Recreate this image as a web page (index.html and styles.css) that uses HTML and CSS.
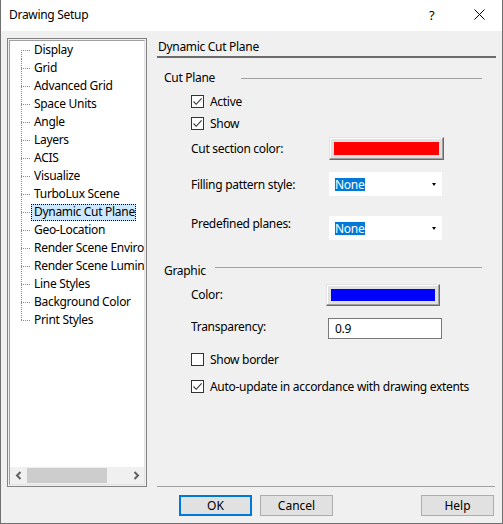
FILE: index.html
```html
<!DOCTYPE html>
<html lang="en">
<head>
<meta charset="utf-8">
<title>Drawing Setup</title>
<link rel="stylesheet" href="styles.css">
</head>
<body>
<div class="window">
  <header class="titlebar">
    <span class="title">Drawing Setup</span>
    <span class="tb-help">?</span>
    <span class="tb-close">
      <svg width="11" height="11" viewBox="0 0 11 11"><path d="M0.5 0.5 L10.5 10.5 M10.5 0.5 L0.5 10.5" stroke="#000" stroke-width="1" fill="none"/></svg>
    </span>
  </header>

  <div class="client">
    <div class="tree">
      <div class="tree-inner">
        <ul class="tree-list">
          <li class="first"><span>Display</span></li>
          <li><span>Grid</span></li>
          <li><span>Advanced Grid</span></li>
          <li><span>Space Units</span></li>
          <li><span>Angle</span></li>
          <li><span>Layers</span></li>
          <li><span>ACIS</span></li>
          <li><span>Visualize</span></li>
          <li><span>TurboLux Scene</span></li>
          <li class="selected"><span>Dynamic Cut Plane</span></li>
          <li><span>Geo-Location</span></li>
          <li><span>Render Scene Environment</span></li>
          <li><span>Render Scene Luminance</span></li>
          <li><span>Line Styles</span></li>
          <li><span>Background Color</span></li>
          <li class="last"><span>Print Styles</span></li>
        </ul>
        <div class="hscroll">
          <span class="sb-arrow">
            <svg width="8" height="9" viewBox="0 0 8 9"><path d="M5.5 1 L2 4.5 L5.5 8" stroke="#606060" stroke-width="2" fill="none"/></svg>
          </span>
          <span class="sb-track"><span class="sb-thumb"></span></span>
          <span class="sb-arrow">
            <svg width="8" height="9" viewBox="0 0 8 9"><path d="M2.5 1 L6 4.5 L2.5 8" stroke="#606060" stroke-width="2" fill="none"/></svg>
          </span>
        </div>
      </div>
    </div>

    <div class="page">
      <div class="page-title">Dynamic Cut Plane</div>

      <div class="page-body">
        <div class="group-head g-cut">
          <span class="group-label">Cut Plane</span>
          <span class="group-rule"></span>
        </div>

        <label class="check-row r-active">
          <span class="checkbox checked"><svg width="11" height="11" viewBox="0 0 11 11"><path d="M1.5 5.5 L4.2 8.3 L9.6 2.3" stroke="#333" stroke-width="1.1" fill="none"/></svg></span>
          <span>Active</span>
        </label>
        <label class="check-row r-show">
          <span class="checkbox checked"><svg width="11" height="11" viewBox="0 0 11 11"><path d="M1.5 5.5 L4.2 8.3 L9.6 2.3" stroke="#333" stroke-width="1.1" fill="none"/></svg></span>
          <span>Show</span>
        </label>

        <div class="form-row r-cutcolor">
          <span class="form-label">Cut section color:</span>
          <span class="color-btn cb-cut"><span class="swatch sw-red"></span></span>
        </div>

        <div class="form-row r-fill">
          <span class="form-label">Filling pattern style:</span>
          <span class="combo"><span class="combo-value">None</span><span class="combo-arrow"></span></span>
        </div>

        <div class="form-row r-planes">
          <span class="form-label">Predefined planes:</span>
          <span class="combo"><span class="combo-value">None</span><span class="combo-arrow"></span></span>
        </div>

        <div class="group-head g-graphic">
          <span class="group-label">Graphic</span>
          <span class="group-rule"></span>
        </div>

        <div class="form-row r-color">
          <span class="form-label">Color:</span>
          <span class="color-btn cb-graphic"><span class="swatch sw-blue"></span></span>
        </div>

        <div class="form-row r-transp">
          <span class="form-label">Transparency:</span>
          <span class="textbox">0.9</span>
        </div>

        <label class="check-row r-border">
          <span class="checkbox"></span>
          <span>Show border</span>
        </label>
        <label class="check-row r-auto">
          <span class="checkbox checked"><svg width="11" height="11" viewBox="0 0 11 11"><path d="M1.5 5.5 L4.2 8.3 L9.6 2.3" stroke="#333" stroke-width="1.1" fill="none"/></svg></span>
          <span>Auto-update in accordance with drawing extents</span>
        </label>
      </div>

      <div class="footer">
        <button class="btn btn-default" type="button">OK</button>
        <button class="btn" type="button">Cancel</button>
        <button class="btn btn-help" type="button">Help</button>
      </div>
    </div>
  </div>
</div>
</body>
</html>
```

FILE: styles.css
```css
* {
  box-sizing: border-box;
}

html, body {
  margin: 0;
  padding: 0;
  background: #f0f0f0;
}

body {
  font-family: "Noto Sans", "Open Sans", sans-serif;
  font-size: 12px;
  letter-spacing: -0.3px;
  color: #000;
}

.window {
  width: 503px;
  height: 524px;
  display: flex;
  flex-direction: column;
  border: 1px solid #707070;
  border-top: none;
  background: #f0f0f0;
  overflow: hidden;
}

/* ---------- title bar ---------- */
.titlebar {
  height: 31px;
  flex: none;
  display: flex;
  align-items: center;
  background: #fff;
  padding-left: 8px;
}

.title {
  flex: 1;
  line-height: 16px;
  padding-bottom: 1px;
}

.tb-help {
  width: 8px;
  margin-right: 37px;
  font-size: 13px;
  padding-bottom: 2px;
}

.tb-close {
  display: flex;
  margin-right: 17px;
  padding-bottom: 3px;
}

/* ---------- client area ---------- */
.client {
  flex: 1;
  display: flex;
  gap: 10px;
  padding: 7px 6px 7px 6px;
}

/* ---------- navigation tree ---------- */
.tree {
  width: 140px;
  height: 449px;
  flex: none;
  border: 1px solid #828282;
  padding: 1px;
  background: #f0f0f0;
}

.tree-inner {
  height: 100%;
  display: flex;
  flex-direction: column;
  background: #fff;
  border-top: 1px solid #a0a0a0;
  border-left: 1px solid #a0a0a0;
  border-right: 1px solid #e3e3e3;
  border-bottom: 1px solid #e3e3e3;
}

.tree-list {
  flex: 1;
  list-style: none;
  margin: 0;
  padding: 0 0 0 11px;
  overflow: hidden;
  white-space: nowrap;
}

.tree-list li {
  display: flex;
  height: 18px;
  align-items: center;
}

/* dotted connector: vertical trunk + horizontal branch */
.tree-list li::before {
  content: "";
  flex: none;
  width: 10px;
  align-self: stretch;
  background-image:
    repeating-linear-gradient(to right, #8a8a8a 0 1px, transparent 1px 2px),
    repeating-linear-gradient(to bottom, #8a8a8a 0 1px, transparent 1px 2px);
  background-repeat: no-repeat;
  background-size: 9px 1px, 1px 18px;
  background-position: 0 9px, 0 0;
}

.tree-list li.first::before {
  background-size: 9px 1px, 1px 9px;
  background-position: 0 9px, 0 9px;
}

.tree-list li.last::before {
  background-size: 9px 1px, 1px 10px;
  background-position: 0 9px, 0 0;
}

.tree-list li span {
  padding: 0 1px 0 3px;
  line-height: 16px;
  height: 17px;
  display: flex;
  align-items: center;
}

.tree-list li.selected span {
  background: #cce8ff;
  outline: 1px dotted #000;
  outline-offset: -1px;
}

/* horizontal scroll bar */
.hscroll {
  height: 17px;
  flex: none;
  display: flex;
  background: #f0f0f0;
}

.sb-arrow {
  width: 17px;
  flex: none;
  display: flex;
  align-items: center;
  justify-content: center;
}

.sb-track {
  flex: 1;
  display: flex;
  padding: 1px 0;
}

.sb-thumb {
  width: 80px;
  background: #cdcdcd;
}

/* ---------- property page ---------- */
.page {
  flex: 1;
  display: flex;
  flex-direction: column;
}

.page-title {
  height: 20px;
  line-height: 17px;
  padding-left: 1px;
  border-bottom: 2px solid #6b6b6b;
}

.page-body {
  flex: 1;
  padding-left: 7px;
}

.group-head {
  display: flex;
  align-items: center;
  height: 18px;
}

.group-label {
  flex: none;
}

.group-rule {
  flex: 1;
  height: 1px;
  background: #a0a0a0;
  margin-right: 14px;
}

.g-cut {
  margin-top: 10px;
}

.g-cut .group-label {
  width: 77px;
}

.g-cut .group-rule {
  margin-top: 2px;
}

.g-graphic {
  margin-top: 21px;
}

.g-graphic .group-label {
  width: 51px;
}

.g-graphic .group-rule {
  margin-bottom: 5px;
}

.check-row {
  display: flex;
  align-items: center;
  height: 22px;
  margin-left: 27px;
  gap: 6px;
}

.checkbox {
  width: 13px;
  height: 13px;
  flex: none;
  border: 1px solid #333;
  background: #fff;
  display: flex;
  align-items: center;
  justify-content: center;
}

.r-active { margin-top: 4px; }
.r-border { margin-top: 9px; }
.r-auto   { margin-top: 5px; }

.form-row {
  display: flex;
  align-items: center;
  margin-left: 27px;
}

.form-label {
  width: 138px;
  flex: none;
}

.r-cutcolor { margin-top: 2px; height: 24px; }
.r-fill     { margin-top: 12px; height: 24px; }
.r-planes   { margin-top: 20px; height: 24px; }
.r-planes .form-label { margin-bottom: 9px; }
.r-color    { margin-top: 4px; height: 23px; }
.r-transp   { margin-top: 12px; height: 21px; }
.r-transp .form-label { margin-bottom: 4px; }

.color-btn {
  display: flex;
  background: #e1e1e1;
  border-top: 1px solid #e3e3e3;
  border-left: 1px solid #e3e3e3;
  border-right: 1px solid #696969;
  border-bottom: 1px solid #696969;
  box-shadow: inset -1px -1px 0 #a0a0a0, inset 1px 1px 0 #fff;
  padding: 3px 3px;
}

.cb-cut {
  width: 115px;
  height: 23px;
}

.cb-graphic {
  width: 114px;
  height: 22px;
  margin-left: -3px;
}

.swatch {
  flex: 1;
  border: 1px solid #e1e1e1;
}

.sw-red  { background: #ff0000; }
.sw-blue { background: #0000ff; }

.combo {
  width: 113px;
  height: 24px;
  background: #fff;
  display: flex;
  align-items: center;
  padding-left: 6px;
  padding-right: 6px;
}

.combo-value {
  background: #0078d7;
  color: #fff;
  height: 13px;
  line-height: 13px;
  padding: 0 1px 0 0;
}

.combo-arrow {
  margin-left: auto;
  width: 0;
  height: 0;
  border-left: 2.5px solid transparent;
  border-right: 2.5px solid transparent;
  border-top: 3px solid #000;
  margin-top: 1px;
}

.textbox {
  width: 114px;
  height: 21px;
  margin-left: -1px;
  background: #fff;
  border: 1px solid #7a7a7a;
  display: flex;
  align-items: center;
  padding-left: 6px;
}

/* ---------- footer buttons ---------- */
.footer {
  border-top: 1px solid #a0a0a0;
  padding: 8px 1px 0 22px;
  display: flex;
  gap: 8px;
  margin-right: 1px;
}

.btn {
  width: 73px;
  height: 21px;
  margin: 0;
  padding: 0;
  font: inherit;
  color: #000;
  background: #e1e1e1;
  border: 1px solid #adadad;
}

.btn-default {
  border: 2px solid #0078d7;
}

.btn-help {
  margin-left: auto;
}
```
